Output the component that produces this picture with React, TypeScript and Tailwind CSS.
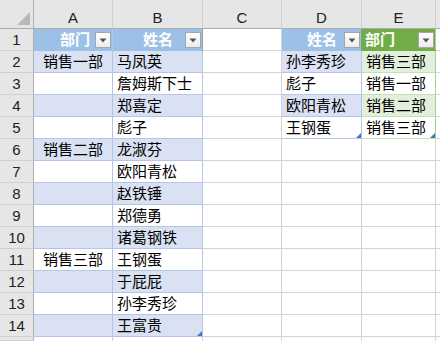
import type { ReactNode } from "react";

type Tone = "blue" | "white" | "green" | "gwhite" | "none";

interface CellSpec {
  text?: string;
  tone: Tone;
  align?: "left" | "center";
  handle?: boolean;
  bottom?: string;
}

const cols = ["A", "B", "C", "D", "E", ""];

const deptRows: Record<number, string> = { 2: "销售一部", 6: "销售二部", 11: "销售三部" };
const names = [
  "马凤英",
  "詹姆斯下士",
  "郑喜定",
  "彪子",
  "龙淑芬",
  "欧阳青松",
  "赵铁锤",
  "郑德勇",
  "诸葛钢铁",
  "王钢蛋",
  "于屁屁",
  "孙李秀珍",
  "王富贵",
];
const lookup = [
  ["孙李秀珍", "销售三部"],
  ["彪子", "销售一部"],
  ["欧阳青松", "销售二部"],
  ["王钢蛋", "销售三部"],
];

const toneBg: Record<Tone, string> = {
  blue: "bg-[#d9e1f2] border-b-[#b4c6e7] border-r-[#b4c6e7]",
  white: "bg-white border-b-[#b4c6e7] border-r-[#b4c6e7]",
  green: "bg-[#e2efda] border-b-[#c6e0b4] border-r-[#a9d08e]",
  gwhite: "bg-white border-b-[#c6e0b4] border-r-[#a9d08e]",
  none: "bg-white border-b-[#d4d4d4] border-r-[#d4d4d4]",
};

function FilterButton() {
  return (
    <span className="absolute right-[1px] bottom-[2px] flex h-[16px] w-[16px] items-center justify-center border border-[#a6a6a6] bg-gradient-to-b from-white to-[#ececec]">
      <svg width="8" height="5" viewBox="0 0 8 5">
        <path d="M0.5 0.5 L7.5 0.5 L4 4.5 Z" fill="#555" />
      </svg>
    </span>
  );
}

function Handle() {
  return (
    <svg className="absolute right-0 bottom-0" width="5" height="5" viewBox="0 0 5 5">
      <path d="M5 0 L5 5 L0 5 Z" fill="#4472c4" />
    </svg>
  );
}

function Cell({ spec }: { spec: CellSpec }) {
  return (
    <div
      className={`relative flex items-center border-b border-r text-[15px] text-black ${toneBg[spec.tone]} ${
        spec.align === "center" ? "justify-center" : "pl-[4px]"
      } ${spec.bottom ?? ""}`}
    >
      <span className="whitespace-nowrap leading-none">{spec.text}</span>
      {spec.handle && <Handle />}
    </div>
  );
}

function HeaderCell({
  text,
  bg,
  justify,
  border,
}: {
  text: string;
  bg: string;
  justify: string;
  border: string;
}) {
  return (
    <div className={`relative flex items-center border-b border-r ${bg} ${border} ${justify}`}>
      <span className="text-[15px] font-bold leading-none text-white">{text}</span>
      <FilterButton />
    </div>
  );
}

function RowHead({ children }: { children?: ReactNode }) {
  return (
    <div className="flex items-center justify-center border-b border-r border-b-[#d0d0d0] border-r-[#b0b0b0] bg-[#e6e6e6] pt-[1px] text-[15px] text-[#222]">
      {children}
    </div>
  );
}

export default function App() {
  const rows: ReactNode[] = [];

  for (let r = 2; r <= 14; r++) {
    const band: Tone = r % 2 === 0 ? "blue" : "white";
    const last = r === 14;
    const inLookup = r <= 5;
    const l = lookup[r - 2];
    rows.push(
      <RowHead key={`h${r}`}>{r}</RowHead>,
      <Cell
        key={`a${r}`}
        spec={{
          text: deptRows[r],
          tone: band,
          align: "center",
          bottom: last ? "border-b-[#9a9a9a]" : "",
        }}
      />,
      <Cell
        key={`b${r}`}
        spec={{
          text: names[r - 2],
          tone: band,
          handle: last,
          bottom: last ? "border-b-[#9a9a9a] border-r-[#9a9a9a]" : "border-r-[#9a9a9a]",
        }}
      />,
      <Cell key={`c${r}`} spec={{ tone: "none" }} />,
      <Cell
        key={`d${r}`}
        spec={
          inLookup
            ? {
                text: l[0],
                tone: band,
                handle: r === 5,
                bottom: r === 5 ? "border-b-[#9a9a9a] border-r-[#a9d08e]" : "border-r-[#a9d08e]",
              }
            : { tone: "none" }
        }
      />,
      <Cell
        key={`e${r}`}
        spec={
          inLookup
            ? {
                text: l[1],
                tone: r % 2 === 0 ? "green" : "gwhite",
                handle: r === 5,
                bottom: r === 5 ? "border-b-[#a9d08e]" : "",
              }
            : { tone: "none" }
        }
      />,
      <Cell key={`f${r}`} spec={{ tone: "none" }} />
    );
  }

  return (
    <div
      className="grid h-[341px] w-[440px] grid-cols-[34px_79px_90px_79px_80px_74px_1fr] grid-rows-[29px_repeat(14,22px)_1fr] overflow-hidden bg-white"
      style={{ fontFamily: '"Liberation Sans", "Noto Sans CJK SC", sans-serif' }}
    >
      <div className="relative border-b border-r border-b-[#ababab] border-r-[#b0b0b0] bg-[#e6e6e6]">
        <svg className="absolute right-[3px] bottom-[3px]" width="13" height="13" viewBox="0 0 13 13">
          <path d="M13 0 L13 13 L0 13 Z" fill="#b8b8b8" />
        </svg>
      </div>
      {cols.map((c, i) => (
        <div
          key={`col${i}`}
          className="flex items-end justify-center border-b border-r border-b-[#ababab] border-r-[#d0d0d0] bg-[#e6e6e6] pb-[3px] text-[15px] leading-none text-[#222]"
        >
          {c}
        </div>
      ))}

      <RowHead>1</RowHead>
      <HeaderCell
        text="部门"
        bg="bg-[#9bc2e6]"
        border="border-b-[#9bc2e6] border-r-[#b4c6e7]"
        justify="justify-start pl-[26px]"
      />
      <HeaderCell
        text="姓名"
        bg="bg-[#9bc2e6]"
        border="border-b-[#9bc2e6] border-r-[#9a9a9a]"
        justify="justify-start pl-[30px]"
      />
      <Cell spec={{ tone: "none" }} />
      <HeaderCell
        text="姓名"
        bg="bg-[#9bc2e6]"
        border="border-b-[#9bc2e6] border-r-[#70ad47]"
        justify="justify-end pr-[24px]"
      />
      <HeaderCell
        text="部门"
        bg="bg-[#70ad47]"
        border="border-b-[#70ad47] border-r-[#a9d08e]"
        justify="justify-start pl-[3px]"
      />
      <Cell spec={{ tone: "none" }} />

      {rows}

      <RowHead />
      {cols.map((_, i) => (
        <div key={`z${i}`} className="border-r border-r-[#d4d4d4] bg-white" />
      ))}
    </div>
  );
}
